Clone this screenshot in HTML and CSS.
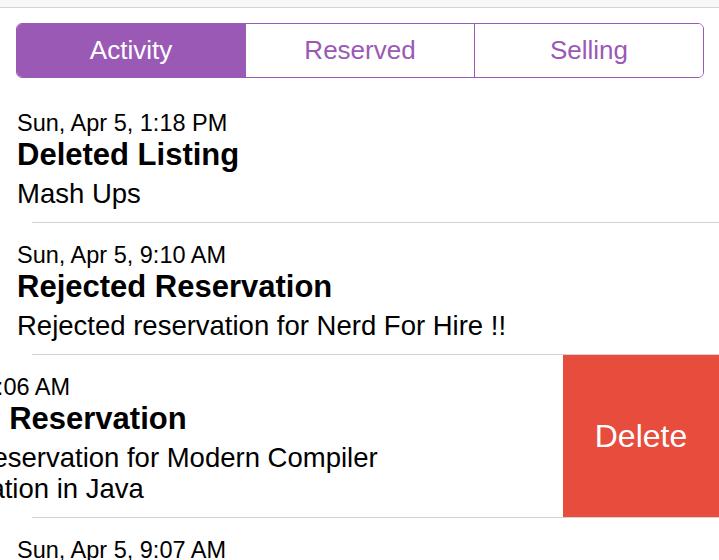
FILE: index.html
```html
<!DOCTYPE html>
<html lang="en">
<head>
<meta charset="utf-8">
<title>Activity</title>
<link rel="stylesheet" href="styles.css">
</head>
<body>
<div class="topbar"></div>
<div class="seg-wrap">
  <div class="segmented">
    <div class="seg active">Activity</div>
    <div class="seg">Reserved</div>
    <div class="seg">Selling</div>
  </div>
</div>
<div class="list">
  <div class="row">
    <div class="content">
      <div class="date">Sun, Apr 5, 1:18 PM</div>
      <div class="title">Deleted Listing</div>
      <div class="sub">Mash Ups</div>
    </div>
  </div>
  <div class="sep"></div>
  <div class="row">
    <div class="content">
      <div class="date">Sun, Apr 5, 9:10 AM</div>
      <div class="title">Rejected Reservation</div>
      <div class="sub">Rejected reservation for Nerd For Hire !!</div>
    </div>
  </div>
  <div class="sep"></div>
  <div class="row swiped">
    <div class="content">
      <div class="date">Sun, Apr 5, 9:06 AM</div>
      <div class="title">Accepted Reservation</div>
      <div class="sub">Accepted reservation for Modern Compiler Implementation in Java</div>
    </div>
    <div class="delete">Delete</div>
  </div>
  <div class="sep"></div>
  <div class="row">
    <div class="content">
      <div class="date">Sun, Apr 5, 9:07 AM</div>
      <div class="title">Rejected Reservation</div>
      <div class="sub">Rejected reservation</div>
    </div>
  </div>
</div>
</body>
</html>
```
FILE: styles.css
```css
html, body {
  margin: 0;
  padding: 0;
  background: #ffffff;
  overflow: hidden;
}
body {
  width: 719px;
  height: 560px;
  font-family: "Liberation Sans", Arial, sans-serif;
  color: #000;
}
.topbar {
  height: 7px;
  background: #f7f7f7;
  border-bottom: 1px solid #d4d4d6;
}
.seg-wrap {
  padding: 15px 15px 13px 16px;
}
.segmented {
  display: flex;
  height: 53px;
  border: 1.5px solid #9b59b6;
  border-radius: 6px;
  overflow: hidden;
}
.seg {
  flex: 1 1 0;
  display: flex;
  align-items: center;
  justify-content: center;
  font-size: 26px;
  color: #9b59b6;
  background: #fff;
}
.seg + .seg {
  border-left: 1.5px solid #9b59b6;
}
.seg.active {
  background: #9b59b6;
  color: #fff;
}
.list {
  display: flex;
  flex-direction: column;
}
.row {
  display: flex;
  overflow: hidden;
}
.content {
  flex: 0 0 100%;
  box-sizing: border-box;
  padding: 18px 15px 13px 17px;
}
.date {
  font-size: 23.5px;
  line-height: 28px;
}
.title {
  font-size: 31px;
  line-height: 36px;
  font-weight: bold;
}
.sub {
  font-size: 27.5px;
  line-height: 31px;
  margin-top: 5px;
}
.sep {
  height: 1px;
  margin-left: 32px;
  background: #d2d2d4;
}
.swiped .content {
  margin-left: -156px;
}
.delete {
  flex: 0 0 156px;
  display: flex;
  align-items: center;
  justify-content: center;
  background: #e74c3c;
  color: #fff;
  font-size: 32px;
}
```
